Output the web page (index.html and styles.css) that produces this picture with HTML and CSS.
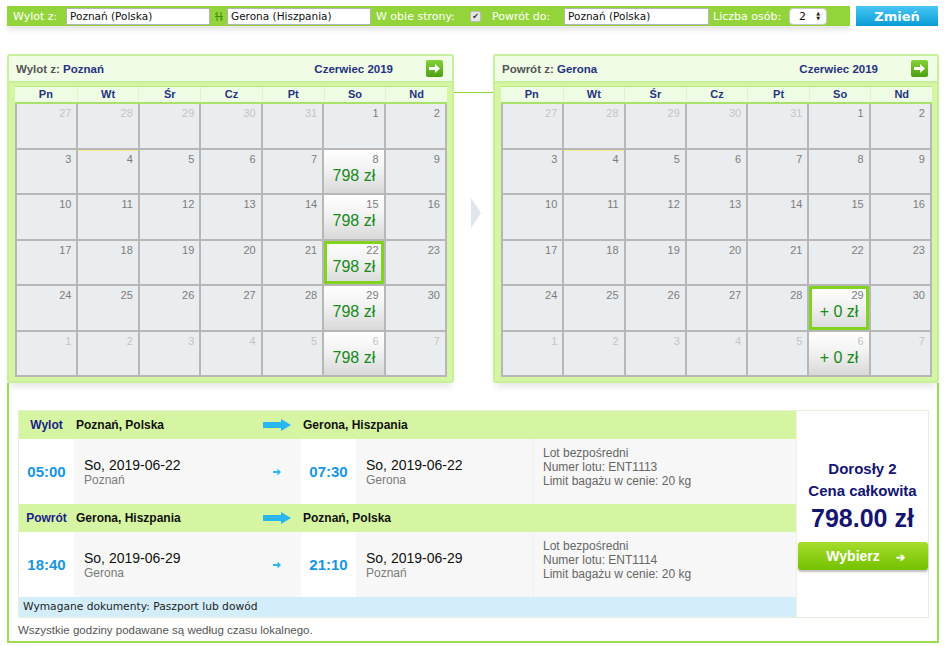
FILE: index.html
```html
<!DOCTYPE html>
<html lang="pl">
<head>
  <meta charset="UTF-8">
  <title>Wyszukiwarka lotów</title>
  <link rel="stylesheet" href="styles.css">
</head>
<body>
<div class="page">
  <div class="search">
    <div class="search-bar">
      <span class="lbl lbl-from">Wylot z:</span>
      <span class="field f-from">Poznań (Polska)</span>
      <span class="swap">
        <svg width="8" height="9" viewBox="0 0 8 9"><path d="M2 0v9M6 0v9M0 4.5h8M0 2h2M6 7h2" stroke="#3f8f14" stroke-width="1" fill="none"/></svg>
      </span>
      <span class="field f-to">Gerona (Hiszpania)</span>
      <span class="lbl lbl-both">W obie strony:</span>
      <span class="check">✔</span>
      <span class="lbl lbl-back">Powrót do:</span>
      <span class="field f-back">Poznań (Polska)</span>
      <span class="lbl lbl-pax">Liczba osób:</span>
      <span class="select">2<span class="spin">▲<br>▼</span></span>
    </div>
    <button class="change">Zmień</button>
  </div>

  <div class="calendars">
    <section class="cal">
      <header class="cal-head">
        <span class="cal-title">Wylot z: <b>Poznań</b></span>
        <span class="cal-month">Czerwiec 2019</span>
        <span class="next"><svg width="11" height="9" viewBox="0 0 11 9"><path d="M0 3h6V0l5 4.5L6 9V6H0z" fill="#fff"/></svg></span>
      </header>
      <div class="cal-body">
        <div class="weekdays"><span>Pn</span><span>Wt</span><span>Śr</span><span>Cz</span><span>Pt</span><span>So</span><span>Nd</span></div>
        <div class="days">
          <div class="day other"><span class="num">27</span></div>
          <div class="day other"><span class="num">28</span></div>
          <div class="day other"><span class="num">29</span></div>
          <div class="day other"><span class="num">30</span></div>
          <div class="day other"><span class="num">31</span></div>
          <div class="day"><span class="num">1</span></div>
          <div class="day"><span class="num">2</span></div>

          <div class="day"><span class="num">3</span></div>
          <div class="day today"><span class="num">4</span></div>
          <div class="day"><span class="num">5</span></div>
          <div class="day"><span class="num">6</span></div>
          <div class="day"><span class="num">7</span></div>
          <div class="day price"><span class="num">8</span><span class="fare">798 zł</span></div>
          <div class="day"><span class="num">9</span></div>

          <div class="day"><span class="num">10</span></div>
          <div class="day"><span class="num">11</span></div>
          <div class="day"><span class="num">12</span></div>
          <div class="day"><span class="num">13</span></div>
          <div class="day"><span class="num">14</span></div>
          <div class="day price"><span class="num">15</span><span class="fare">798 zł</span></div>
          <div class="day"><span class="num">16</span></div>

          <div class="day"><span class="num">17</span></div>
          <div class="day"><span class="num">18</span></div>
          <div class="day"><span class="num">19</span></div>
          <div class="day"><span class="num">20</span></div>
          <div class="day"><span class="num">21</span></div>
          <div class="day price sel"><span class="num">22</span><span class="fare">798 zł</span></div>
          <div class="day"><span class="num">23</span></div>

          <div class="day"><span class="num">24</span></div>
          <div class="day"><span class="num">25</span></div>
          <div class="day"><span class="num">26</span></div>
          <div class="day"><span class="num">27</span></div>
          <div class="day"><span class="num">28</span></div>
          <div class="day price"><span class="num">29</span><span class="fare">798 zł</span></div>
          <div class="day"><span class="num">30</span></div>

          <div class="day other"><span class="num">1</span></div>
          <div class="day other"><span class="num">2</span></div>
          <div class="day other"><span class="num">3</span></div>
          <div class="day other"><span class="num">4</span></div>
          <div class="day other"><span class="num">5</span></div>
          <div class="day other price"><span class="num">6</span><span class="fare">798 zł</span></div>
          <div class="day other"><span class="num">7</span></div>
        </div>
      </div>
    </section>

    <div class="between">
      <div class="link-line"></div>
      <div class="pointer"></div>
    </div>

    <section class="cal cal-right">
      <header class="cal-head">
        <span class="cal-title">Powrót z: <b>Gerona</b></span>
        <span class="cal-month">Czerwiec 2019</span>
        <span class="next"><svg width="11" height="9" viewBox="0 0 11 9"><path d="M0 3h6V0l5 4.5L6 9V6H0z" fill="#fff"/></svg></span>
      </header>
      <div class="cal-body">
        <div class="weekdays"><span>Pn</span><span>Wt</span><span>Śr</span><span>Cz</span><span>Pt</span><span>So</span><span>Nd</span></div>
        <div class="days">
          <div class="day other"><span class="num">27</span></div>
          <div class="day other"><span class="num">28</span></div>
          <div class="day other"><span class="num">29</span></div>
          <div class="day other"><span class="num">30</span></div>
          <div class="day other"><span class="num">31</span></div>
          <div class="day"><span class="num">1</span></div>
          <div class="day"><span class="num">2</span></div>

          <div class="day"><span class="num">3</span></div>
          <div class="day today"><span class="num">4</span></div>
          <div class="day"><span class="num">5</span></div>
          <div class="day"><span class="num">6</span></div>
          <div class="day"><span class="num">7</span></div>
          <div class="day"><span class="num">8</span></div>
          <div class="day"><span class="num">9</span></div>

          <div class="day"><span class="num">10</span></div>
          <div class="day"><span class="num">11</span></div>
          <div class="day"><span class="num">12</span></div>
          <div class="day"><span class="num">13</span></div>
          <div class="day"><span class="num">14</span></div>
          <div class="day"><span class="num">15</span></div>
          <div class="day"><span class="num">16</span></div>

          <div class="day"><span class="num">17</span></div>
          <div class="day"><span class="num">18</span></div>
          <div class="day"><span class="num">19</span></div>
          <div class="day"><span class="num">20</span></div>
          <div class="day"><span class="num">21</span></div>
          <div class="day"><span class="num">22</span></div>
          <div class="day"><span class="num">23</span></div>

          <div class="day"><span class="num">24</span></div>
          <div class="day"><span class="num">25</span></div>
          <div class="day"><span class="num">26</span></div>
          <div class="day"><span class="num">27</span></div>
          <div class="day"><span class="num">28</span></div>
          <div class="day price sel"><span class="num">29</span><span class="fare">+ 0 zł</span></div>
          <div class="day"><span class="num">30</span></div>

          <div class="day other"><span class="num">1</span></div>
          <div class="day other"><span class="num">2</span></div>
          <div class="day other"><span class="num">3</span></div>
          <div class="day other"><span class="num">4</span></div>
          <div class="day other"><span class="num">5</span></div>
          <div class="day other price"><span class="num">6</span><span class="fare">+ 0 zł</span></div>
          <div class="day other"><span class="num">7</span></div>
        </div>
      </div>
    </section>
  </div>

  <div class="summary">
    <div class="offer">
      <div class="legs">
        <div class="leg-head">
          <span class="c-time kind">Wylot</span>
          <span class="c-from">Poznań, Polska
            <svg class="big-arrow" width="28" height="12" viewBox="0 0 28 12"><path d="M0 3h18V0l10 6-10 6V9H0z" fill="#29b6f2"/></svg>
          </span>
          <span class="c-to">Gerona, Hiszpania</span>
        </div>
        <div class="leg-body">
          <span class="c-time time">05:00</span>
          <span class="c-from when">
            <span class="date">So, 2019-06-22<small>Poznań</small></span>
            <svg class="small-arrow" width="8" height="8" viewBox="0 0 8 8"><path d="M0 3h4.5V0.5L8 4 4.5 7.5V5H0z" fill="#29b6f2"/></svg>
          </span>
          <span class="c-time time">07:30</span>
          <span class="c-arr when"><span class="date">So, 2019-06-22<small>Gerona</small></span></span>
          <span class="c-info">Lot bezpośredni<br>Numer lotu: ENT1113<br>Limit bagażu w cenie: 20 kg</span>
        </div>
        <div class="leg-head">
          <span class="c-time kind">Powrót</span>
          <span class="c-from">Gerona, Hiszpania
            <svg class="big-arrow" width="28" height="12" viewBox="0 0 28 12"><path d="M0 3h18V0l10 6-10 6V9H0z" fill="#29b6f2"/></svg>
          </span>
          <span class="c-to">Poznań, Polska</span>
        </div>
        <div class="leg-body">
          <span class="c-time time">18:40</span>
          <span class="c-from when">
            <span class="date">So, 2019-06-29<small>Gerona</small></span>
            <svg class="small-arrow" width="8" height="8" viewBox="0 0 8 8"><path d="M0 3h4.5V0.5L8 4 4.5 7.5V5H0z" fill="#29b6f2"/></svg>
          </span>
          <span class="c-time time">21:10</span>
          <span class="c-arr when"><span class="date">So, 2019-06-29<small>Poznań</small></span></span>
          <span class="c-info">Lot bezpośredni<br>Numer lotu: ENT1114<br>Limit bagażu w cenie: 20 kg</span>
        </div>
        <div class="docs">Wymagane dokumenty: Paszport lub dowód</div>
      </div>
      <div class="total">
        <div class="pax">Dorosły 2</div>
        <div class="pax">Cena całkowita</div>
        <div class="amount">798.00 zł</div>
        <button class="choose">Wybierz <span class="go">➔</span></button>
      </div>
    </div>
    <p class="note">Wszystkie godziny podawane są według czasu lokalnego.</p>
  </div>
</div>
</body>
</html>
```

FILE: styles.css
```css
body {
    margin: 0;
    background: #fff;
    font-family: "Liberation Sans", Arial, sans-serif;
}

.page {
    width: 946px;
    padding-top: 6px;
}

/* search bar */
.search {
    display: flex;
    height: 20px;
    margin-left: 7px;
}

.search-bar {
    display: flex;
    align-items: center;
    width: 843px;
    background: #94d43b;
    box-shadow: 0 4px 5px rgba(0, 0, 0, 0.1);
    font-family: "DejaVu Sans", Verdana, sans-serif;
    font-size: 11px;
    color: #fff;
}

.lbl {
    flex: none;
    box-sizing: border-box;
    white-space: nowrap;
}

.lbl-from { width: 59px; padding-left: 6px; }
.lbl-both { width: 99px; padding-left: 5px; }
.lbl-back { width: 83px; padding-left: 11px; }
.lbl-pax { width: 80px; padding-left: 4px; }

.field {
    flex: none;
    box-sizing: border-box;
    height: 17px;
    line-height: 15px;
    padding-left: 3px;
    background: #fff;
    border: 1px solid #b4b4b4;
    color: #111;
    font-size: 10.5px;
}

.f-from, .f-to { width: 144px; }
.f-back { width: 145px; }

.swap {
    flex: none;
    width: 17px;
    text-align: center;
    line-height: 0;
}

.check {
    flex: none;
    width: 9px;
    height: 9px;
    background: #e6e6e6;
    border: 1px solid #bbb;
    border-radius: 2px;
    color: #333;
    font-size: 8px;
    line-height: 9px;
    text-align: center;
}

.select {
    flex: none;
    display: flex;
    align-items: center;
    justify-content: space-between;
    box-sizing: border-box;
    width: 38px;
    height: 17px;
    padding: 0 6px 0 9px;
    background: #fff;
    border: 1px solid #c8c8c8;
    border-radius: 4px;
    color: #111;
}

.spin {
    font-size: 5px;
    line-height: 5px;
    color: #222;
}

.change {
    width: 82px;
    height: 20px;
    margin-left: 6px;
    padding: 0;
    border: 0;
    background: linear-gradient(#48c6f4, #089cd6);
    color: #fff;
    font-family: "DejaVu Sans", Verdana, sans-serif;
    font-weight: bold;
    font-size: 13px;
}

/* calendars */
.calendars {
    display: flex;
    margin: 28px 0 0 7px;
}

.cal {
    box-sizing: border-box;
    width: 447px;
    border: 2px solid #c8ef99;
    border-radius: 3px;
    background: #d5f5a3;
    box-shadow: 0 7px 7px -3px rgba(0, 0, 0, 0.1);
}

.cal-right {
    width: 446px;
}

.cal-head {
    display: flex;
    align-items: center;
    height: 25px;
    padding: 0 9px 0 7px;
    background: #f0fce5;
    border-bottom: 2px solid #c8ef99;
    font-size: 11.5px;
    font-weight: bold;
    color: #555;
}

.cal-title b {
    color: #26337f;
}

.cal-month {
    margin-left: auto;
    margin-right: 33px;
    color: #26337f;
}

.next {
    display: flex;
    align-items: center;
    justify-content: center;
    width: 17px;
    height: 17px;
    border-radius: 2px;
    background: linear-gradient(#86d138, #4d9f12);
}

.cal-body {
    padding: 3px 5px 4px 6px;
}

.weekdays {
    display: grid;
    grid-template-columns: repeat(7, 1fr);
    height: 15px;
    background: #effce4;
    border-top: 1px solid #b6e882;
    border-bottom: 2px solid #a9e16b;
    font-size: 11px;
    font-weight: bold;
    line-height: 15px;
    color: #26337f;
    text-align: center;
}

.weekdays span + span {
    border-left: 1px solid #dff3c9;
}

.days {
    display: grid;
    grid-template-columns: repeat(7, 1fr);
    grid-auto-rows: 43.5px;
    gap: 2px;
    padding: 0 2px 2px;
    background: #b7b7b7;
}

.day {
    display: flex;
    flex-direction: column;
    background: #eaedf0;
}

.num {
    padding: 3px 5px 0 0;
    font-size: 11px;
    line-height: 13px;
    color: #7c7c7c;
    text-align: right;
}

.other .num {
    color: #c4c4c4;
}

.today {
    box-shadow: inset 0 1px 0 #f6ec8e;
}

.price {
    background: linear-gradient(#fff, #f2f2f2 45%, #d9d9d9);
}

.sel {
    box-shadow: inset 0 0 0 3px #80d420;
}

.fare {
    margin-top: 1px;
    font-size: 16px;
    color: #16891a;
    text-align: center;
}

.between {
    width: 39px;
    flex: none;
}

.link-line {
    height: 1px;
    margin-top: 38px;
    background: #8fd43a;
}

.pointer {
    width: 0;
    height: 0;
    margin: 105px 0 0 17px;
    border-left: 10px solid #dfe5ec;
    border-top: 15px solid transparent;
    border-bottom: 15px solid transparent;
}

/* summary */
.summary {
    margin-left: 7px;
    width: 932px;
    box-sizing: border-box;
    padding: 27px 8px 0 9px;
    border: 2px solid #9edb4f;
    border-top: 0;
}

.offer {
    display: flex;
    border: 1px solid #e6efdb;
}

.legs {
    width: 777px;
}

.leg-head {
    display: flex;
    align-items: center;
    height: 28px;
    background: #d6f5a2;
    font-size: 12px;
    font-weight: bold;
    color: #111;
}

.c-time {
    flex: none;
    width: 55px;
    text-align: center;
}

.c-from {
    flex: none;
    display: flex;
    align-items: center;
    box-sizing: border-box;
    width: 227px;
    padding: 0 10px 0 2px;
}

.big-arrow, .small-arrow {
    margin-left: auto;
}

.c-to {
    padding-left: 2px;
}

.kind {
    color: #1b1d86;
}

.leg-body {
    display: flex;
    align-items: stretch;
    height: 65px;
    background: #fff;
}

.time {
    align-self: center;
    font-size: 15px;
    font-weight: bold;
    color: #1795df;
}

.when {
    background: #f7f7f7;
    padding-left: 10px;
    padding-right: 20px;
}

.c-arr {
    display: flex;
    align-items: center;
    box-sizing: border-box;
    width: 178px;
    border-right: 1px solid #efefef;
}

.date {
    font-size: 14px;
    line-height: 15px;
    color: #111;
    margin-top: 1px;
}

.date small {
    display: block;
    font-size: 12px;
    line-height: 14px;
    color: #7a7a7a;
}

.c-info {
    flex: 1;
    padding: 7px 0 0 9px;
    background: #f7f7f7;
    font-size: 12px;
    line-height: 14px;
    color: #666;
}

.docs {
    height: 20px;
    padding-left: 4px;
    background: #d3eefa;
    font-family: "DejaVu Sans", Verdana, sans-serif;
    font-size: 10.7px;
    line-height: 20px;
    color: #222;
}

.total {
    flex: 1;
    display: flex;
    flex-direction: column;
    align-items: center;
    padding-top: 47px;
    border-left: 1px solid #eef2e8;
    color: #15156f;
    font-weight: bold;
}

.pax {
    font-size: 15px;
    line-height: 22px;
}

.amount {
    margin-top: 2px;
    font-size: 25px;
    line-height: 28px;
}

.choose {
    width: 130px;
    height: 28px;
    margin-top: 10px;
    padding-left: 12px;
    border: 0;
    border-radius: 3px;
    background: linear-gradient(#a5dd2c, #74c100);
    box-shadow: 0 2px 2px rgba(0, 0, 0, 0.25);
    color: #fff;
    font-family: "Liberation Sans", Arial, sans-serif;
    font-size: 14px;
    font-weight: bold;
}

.go {
    margin-left: 12px;
    font-size: 11px;
}

.note {
    margin: 0;
    padding: 5px 0 4px;
    font-size: 11.5px;
    line-height: 14px;
    color: #555;
}
```
